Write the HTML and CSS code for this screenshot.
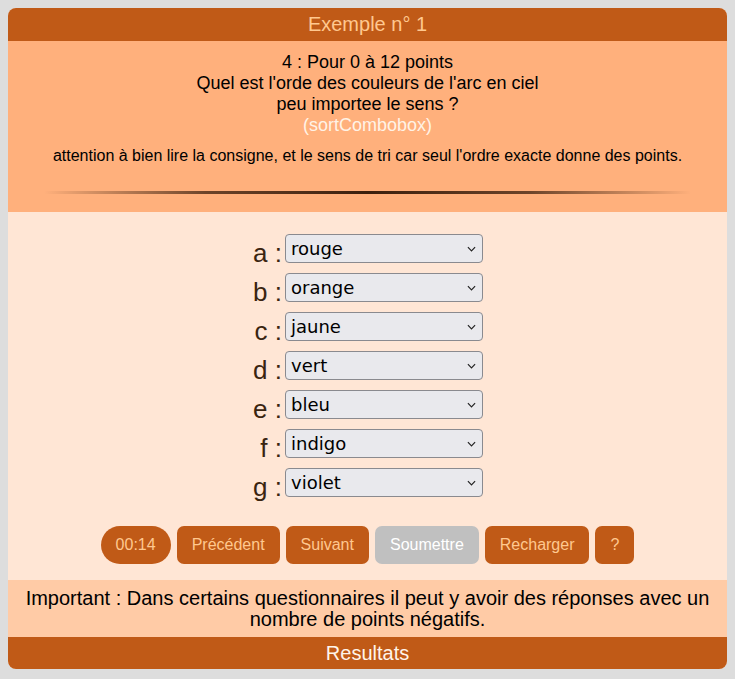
FILE: index.html
```html
<!DOCTYPE html>
<html lang="fr">
<head>
<meta charset="utf-8">
<title>Exemple n° 1</title>
<link rel="stylesheet" href="styles.css">
</head>
<body>
<div class="quiz">
  <div class="quiz-title">Exemple n° 1</div>
  <div class="question">
    <div class="q-line">4 : Pour 0 à 12 points</div>
    <div class="q-line">Quel est l'orde des couleurs de l'arc en ciel</div>
    <div class="q-line">peu importee le sens ?</div>
    <div class="q-line q-type">(sortCombobox)</div>
    <div class="q-note">attention à bien lire la consigne, et le sens de tri car seul l'ordre exacte donne des points.</div>
    <div class="separator"></div>
  </div>
  <div class="answers">
    <div class="rows">
      <div class="row"><span class="lbl">a :</span><div class="combo"><span>rouge</span><svg class="chev" viewBox="0 0 10 6" width="9" height="6"><path d="M1 1 L5 5 L9 1" fill="none" stroke="#222" stroke-width="1.3"/></svg></div></div>
      <div class="row"><span class="lbl">b :</span><div class="combo"><span>orange</span><svg class="chev" viewBox="0 0 10 6" width="9" height="6"><path d="M1 1 L5 5 L9 1" fill="none" stroke="#222" stroke-width="1.3"/></svg></div></div>
      <div class="row"><span class="lbl">c :</span><div class="combo"><span>jaune</span><svg class="chev" viewBox="0 0 10 6" width="9" height="6"><path d="M1 1 L5 5 L9 1" fill="none" stroke="#222" stroke-width="1.3"/></svg></div></div>
      <div class="row"><span class="lbl">d :</span><div class="combo"><span>vert</span><svg class="chev" viewBox="0 0 10 6" width="9" height="6"><path d="M1 1 L5 5 L9 1" fill="none" stroke="#222" stroke-width="1.3"/></svg></div></div>
      <div class="row"><span class="lbl">e :</span><div class="combo"><span>bleu</span><svg class="chev" viewBox="0 0 10 6" width="9" height="6"><path d="M1 1 L5 5 L9 1" fill="none" stroke="#222" stroke-width="1.3"/></svg></div></div>
      <div class="row"><span class="lbl">f :</span><div class="combo"><span>indigo</span><svg class="chev" viewBox="0 0 10 6" width="9" height="6"><path d="M1 1 L5 5 L9 1" fill="none" stroke="#222" stroke-width="1.3"/></svg></div></div>
      <div class="row"><span class="lbl">g :</span><div class="combo"><span>violet</span><svg class="chev" viewBox="0 0 10 6" width="9" height="6"><path d="M1 1 L5 5 L9 1" fill="none" stroke="#222" stroke-width="1.3"/></svg></div></div>
    </div>
    <div class="buttons">
      <span class="btn timer">00:14</span>
      <span class="btn">Précédent</span>
      <span class="btn">Suivant</span>
      <span class="btn disabled">Soumettre</span>
      <span class="btn">Recharger</span>
      <span class="btn">?</span>
    </div>
  </div>
  <div class="important">Important : Dans certains questionnaires il peut y avoir des réponses avec un nombre de points négatifs.</div>
  <div class="results">Resultats</div>
</div>
</body>
</html>
```

FILE: styles.css
```css
html, body {
  margin: 0;
  padding: 0;
}
body {
  background: #dddddd;
  padding: 8px;
  font-family: "Liberation Sans", Arial, sans-serif;
}
.quiz {
  width: 719px;
  border-radius: 8px;
  overflow: hidden;
  background: #ffe6d5;
}
.quiz-title {
  background: #c05a17;
  color: #ffc88f;
  font-size: 20px;
  height: 33px;
  line-height: 33px;
  text-align: center;
}
.question {
  background: #ffb07c;
  text-align: center;
  padding: 11px 0 18px;
  color: #000;
}
.q-line {
  font-size: 18px;
  line-height: 21px;
}
.q-type {
  color: #fff3e6;
}
.q-note {
  font-size: 16px;
  line-height: 20px;
  margin-top: 10px;
}
.separator {
  width: 90%;
  height: 3px;
  margin: 25px auto 0;
  background: linear-gradient(to right, rgba(59,31,13,0), rgba(59,31,13,0.75) 25%, #3b1f0d 50%, rgba(59,31,13,0.75) 75%, rgba(59,31,13,0));
  border-radius: 2px;
}
.answers {
  padding: 22px 0 16px;
}
.rows {
  display: flex;
  flex-direction: column;
  align-items: center;
  gap: 10px;
}
.row {
  display: flex;
  align-items: flex-end;
  gap: 3px;
}
.lbl {
  width: 30px;
  text-align: right;
  font-size: 26px;
  line-height: 26px;
  color: #3a2410;
  margin-bottom: -3px;
}
.combo {
  width: 198px;
  height: 29px;
  box-sizing: border-box;
  border: 1px solid #8a8a8f;
  border-radius: 4px;
  background: #e9e9ed;
  display: flex;
  align-items: center;
  justify-content: space-between;
  padding: 0 6px 0 5px;
  font-family: "DejaVu Sans", sans-serif;
  font-size: 18px;
  color: #000;
}
.chev {
  display: block;
}
.buttons {
  display: flex;
  justify-content: center;
  gap: 6px;
  margin-top: 29px;
}
.btn {
  height: 38px;
  line-height: 38px;
  padding: 0 15px;
  border-radius: 7px;
  background: #c05a17;
  color: #ffc88f;
  font-size: 16px;
}
.btn.timer {
  border-radius: 19px;
}
.btn.disabled {
  background: #c0c0c0;
  color: #ffffff;
}
.important {
  background: #ffcba6;
  color: #000;
  text-align: center;
  font-size: 20px;
  line-height: 21px;
  padding: 8px 10px 7px;
}
.results {
  background: #c05a17;
  color: #fff4ea;
  text-align: center;
  font-size: 20px;
  height: 32px;
  line-height: 32px;
}
```
